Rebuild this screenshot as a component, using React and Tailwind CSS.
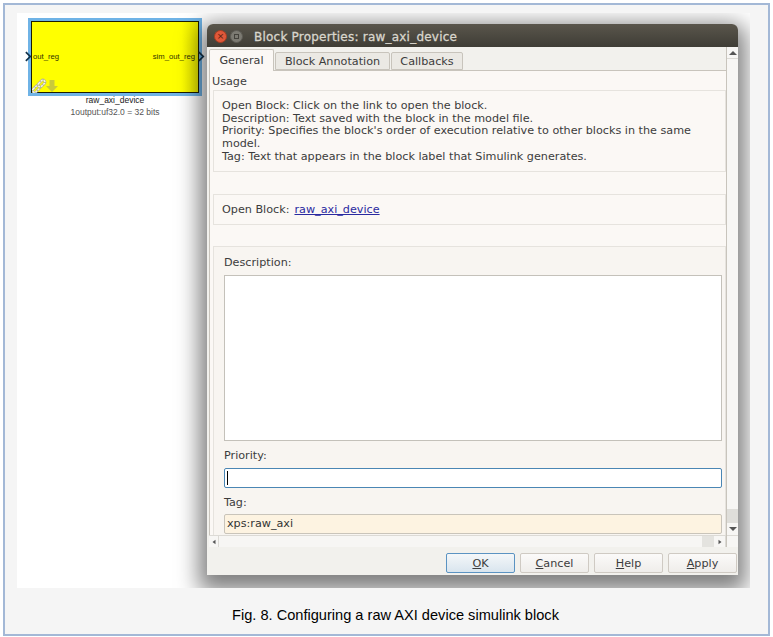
const sans = "font-['DejaVu_Sans',sans-serif]";

function SysButton({ children, primary }) {
  return (
    <button
      className={`w-[69px] h-[20px] rounded-[2px] border pt-[1px] text-[11.2px] leading-[17px] text-[#3c3c3c] ${
        primary
          ? "border-[#5b93c2] bg-gradient-to-b from-[#f4f7f9] to-[#d9e5ee]"
          : "border-[#cfcac3] bg-gradient-to-b from-[#fbfaf9] to-[#efedea]"
      }`}
    >
      {children}
    </button>
  );
}

function Tab({ children, active, className }) {
  return (
    <div
      className={`flex items-center justify-center border border-[#c8c4bc] rounded-t-[2px] text-[11.2px] text-[#3c3c3c] ${
        active ? "h-[22px] pt-[2px] bg-[#fbf8f5] border-b-0 z-10" : "h-[18px] pt-[2px] bg-[#ebe9e4]"
      } ${className}`}
    >
      {children}
    </div>
  );
}

function Arrow({ d, className }) {
  return (
    <svg viewBox="0 0 8 8" className={`w-2 h-2 ${className}`}>
      <path d={d} fill="#555" />
    </svg>
  );
}

function ChainLink({ x, y }) {
  const rotate = `rotate(-45 ${x + 4} ${y + 2})`;
  return (
    <g fill="none">
      <rect x={x} y={y} width="8" height="4" rx="2" transform={rotate} stroke="#b4b48c" strokeWidth="2.6" />
      <rect x={x} y={y} width="8" height="4" rx="2" transform={rotate} stroke="#f6f6ea" strokeWidth="1.4" strokeDasharray="2.2 0.8" />
    </g>
  );
}

function Block() {
  return (
    <div className="absolute left-[11px] top-[5px] w-[174px]">
      <div className="relative w-[174px] h-[78px] border-[3px] border-[#6fb3e6] font-['Liberation_Sans',sans-serif]">
        <div className="relative h-full border border-[#1c1c00] bg-[#ffff00] bg-gradient-to-r from-[#ffff00] from-[90%] to-[#e8e800]">
          <div className="flex h-full items-start justify-between pt-[29px] pl-[1px] pr-[3px] text-[7.7px] leading-[12px] text-[#333300]">
            <span>out_reg</span>
            <span>sim_out_reg</span>
          </div>
          <svg viewBox="0 0 28 16" className="absolute left-0 -bottom-[1px] w-[28px] h-[16px]">
            <ChainLink x={0} y={10} />
            <ChainLink x={5.5} y={4.5} />
            <path d="M17.5 3 h5 v6 h3.5 l-6 6 l-6 -6 h3.5 Z" fill="#c9c93a" />
          </svg>
        </div>
        <svg viewBox="0 0 8 12" className="absolute -left-[6px] top-[30px] w-[7px] h-[11px]">
          <path d="M1 1 L6 6 L1 11" fill="none" stroke="#12324a" strokeWidth="2" />
        </svg>
        <svg viewBox="0 0 8 12" className="absolute -right-[6px] top-[30px] w-[7px] h-[11px]">
          <path d="M1 1 L6 6 L1 11" fill="none" stroke="#12324a" strokeWidth="2" />
        </svg>
      </div>
      <div className="-mt-[2px] text-center text-[8.5px] leading-[12px] text-[#222] font-['Liberation_Sans',sans-serif]">
        raw_axi_device
      </div>
      <div className="text-center text-[8.5px] leading-[12px] text-[#555] font-['Liberation_Sans',sans-serif]">
        1output:uf32.0 = 32 bits
      </div>
    </div>
  );
}

function Dialog() {
  return (
    <div
      className={`absolute left-[190px] top-[11px] w-[531px] h-[551px] flex flex-col bg-[#f2f1ed] rounded-t-[6px] shadow-[0_8px_22px_8px_rgba(0,0,0,0.5)] ${sans}`}
    >
      <div className="flex h-[23px] shrink-0 items-center rounded-t-[6px] bg-gradient-to-b from-[#5a564c] to-[#3f3d36] pl-[7px] pt-[2px]">
        <div className="flex h-[13px] w-[13px] items-center justify-center rounded-full bg-[#e0583a] border border-[#a83e22] text-[9px] leading-none text-[#5b2010]">
          ×
        </div>
        <div className="ml-[3px] flex h-[13px] w-[13px] items-center justify-center rounded-full bg-[#7c7a72] border border-[#5e5c55]">
          <div className="h-[5px] w-[5px] border border-[#44423c]" />
        </div>
        <span className="ml-[11px] text-[12px] text-[#d9d6cd] tracking-[0.22px] [-webkit-text-stroke:0.3px_#d9d6cd]">
          Block Properties: raw_axi_device
        </span>
      </div>
      <div className="flex min-h-0 flex-1 pl-[2px]">
        <div className="flex min-w-0 flex-1 flex-col">
          <div className="flex h-[24px] shrink-0 items-end gap-[1px] border-b border-[#c8c4bc]">
            <Tab active className="w-[65px] -mb-[1px]">General</Tab>
            <Tab className="w-[115px]">Block Annotation</Tab>
            <Tab className="w-[72px]">Callbacks</Tab>
          </div>
          <div className="flex min-h-0 flex-1 flex-col bg-[#fbf8f5] border-l border-[#c8c4bc] text-[11.2px] text-[#3c3c3c]">
            <div className="px-[2px] pt-[4px] h-[19px] leading-[13px]">Usage</div>
            <div className="ml-[3px] h-[82px] border border-[#e6e3de] pl-[8px] pr-[9px] pt-[9px] leading-[12.65px]">
              <div>Open Block: Click on the link to open the block.</div>
              <div>Description: Text saved with the block in the model file.</div>
              <div>Priority: Specifies the block's order of execution relative to other blocks in the same</div>
              <div>model.</div>
              <div>Tag: Text that appears in the block label that Simulink generates.</div>
            </div>
            <div className="ml-[3px] mt-[22px] flex h-[31px] items-center border border-[#e6e3de] pl-[8px] pr-[9px] pt-[2px]">
              Open Block:
              <a className="ml-[5px] text-[#2a2aa0] underline">raw_axi_device</a>
            </div>
            <div className="ml-[3px] mt-[21px] flex min-h-0 flex-1 flex-col border border-[#e6e3de] border-b-0 bg-[#f8f5f1] pl-[10px] pr-[3px] pt-[9px]">
              <div className="h-[19px] leading-[14px]">Description:</div>
              <div className="h-[166px] shrink-0 border border-[#c4c1ba] bg-white" />
              <div className="mt-[8px] h-[19px] leading-[14px]">Priority:</div>
              <div className="flex h-[20px] shrink-0 items-center rounded-[2px] border border-[#4a86b4] bg-white pl-[2px]">
                <div className="h-[14px] w-[1px] bg-black" />
              </div>
              <div className="mt-[8px] h-[18px] leading-[14px]">Tag:</div>
              <div className="flex h-[20px] shrink-0 items-center rounded-[2px] border border-[#c9c4ba] bg-[#fdf3e1] pl-[2px] text-[#333]">
                xps:raw_axi
              </div>
            </div>
          </div>
          <div className="flex h-[12px] shrink-0 items-center border-t border-[#dcdad5] bg-[#f7f6f4]">
            <div className="flex h-full w-[10px] items-center justify-center border-r border-[#dcdad5]">
              <Arrow d="M6 1 L2 4 L6 7 Z" className="h-[6px] w-[6px]" />
            </div>
            <div className="flex-1" />
            <div className="h-full w-[12px] bg-[#e4e3df]" />
            <div className="flex h-full w-[12px] items-center justify-center border-r border-[#dcdad5]">
              <Arrow d="M2 1 L6 4 L2 7 Z" className="h-[6px] w-[6px]" />
            </div>
          </div>
        </div>
        <div className="flex w-[12px] shrink-0 flex-col border-l border-[#c8c4bc] bg-[#f7f6f4]">
          <div className="flex h-[12px] items-center justify-center border-b border-[#dcdad5]">
            <Arrow d="M4 2 L8 6 L0 6 Z" />
          </div>
          <div className="flex-1" />
          <div className="h-[14px] bg-[#dfdeda]" />
          <div className="flex h-[12px] items-center justify-center">
            <Arrow d="M0 2 L8 2 L4 6 Z" />
          </div>
          <div className="h-[12px] border-t border-[#dcdad5]" />
        </div>
      </div>
      <div className="flex h-[28px] shrink-0 items-start justify-end gap-[5px] pr-[1px] pt-[6px]">
        <SysButton primary><u>O</u>K</SysButton>
        <SysButton><u>C</u>ancel</SysButton>
        <SysButton><u>H</u>elp</SysButton>
        <SysButton><u>A</u>pply</SysButton>
      </div>
    </div>
  );
}

export default function App() {
  return (
    <div className="h-[637px] w-[773px] bg-white pt-[3px] pl-[3px] pr-[3px] pb-[1px]">
      <div className="flex h-full flex-col border-2 border-[#a3b8d6] bg-[#f5f5f5] pl-[12px] pt-[8px]">
        <div className="relative h-[575px] w-[733px] shrink-0 overflow-hidden bg-white">
          <Block />
          <Dialog />
        </div>
        <div className="-ml-[12px] pl-[18px] pt-[10px] flex flex-1 items-center justify-center text-[14.6px] text-black font-['Liberation_Sans',sans-serif]">
          Fig. 8. Configuring a raw AXI device simulink block
        </div>
      </div>
    </div>
  );
}
